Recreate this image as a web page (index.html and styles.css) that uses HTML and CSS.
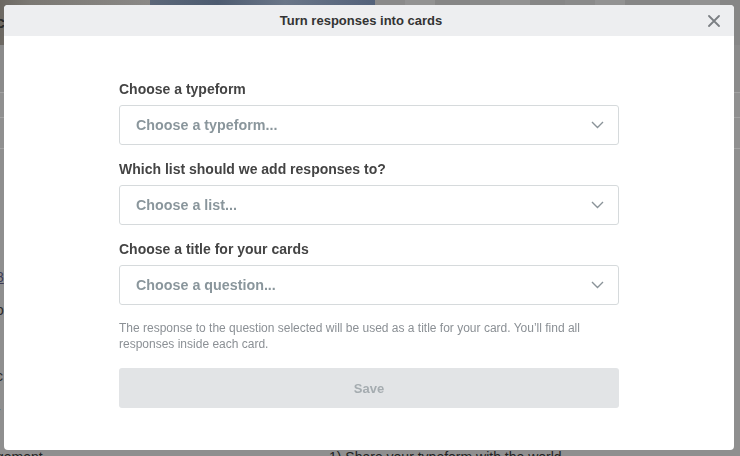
FILE: index.html
```html
<!DOCTYPE html>
<html lang="en">
<head>
<meta charset="utf-8">
<title>Turn responses into cards</title>
<link rel="stylesheet" href="styles.css">
</head>
<body>
<div class="page">
  <div class="banner">
    <div class="banner-left"><span class="banner-letter">c</span></div>
    <div class="banner-photo"></div>
    <div class="banner-right"></div>
  </div>
  <div class="page-row row-a"></div>
  <div class="page-row row-b"></div>
  <div class="page-row row-c"></div>
  <div class="page-body">
    <div class="side-col">
      <span class="frag frag-link">8</span>
      <span class="frag">o</span>
      <span class="frag frag-visited">i</span>
      <span class="frag">c</span>
      <span class="frag">-</span>
    </div>
  </div>
  <div class="page-foot">
    <span class="foot-left">gement</span>
    <span class="foot-right">1) Share your typeform with the world</span>
  </div>
</div>

<div class="modal">
  <div class="modal-header">
    <h1 class="modal-title">Turn responses into cards</h1>
    <button class="close" aria-label="Close">
      <svg width="12" height="12" viewBox="0 0 12 12"><path d="M1 1L11 11M11 1L1 11" stroke="#7b7f83" stroke-width="1.8" stroke-linecap="round" fill="none"/></svg>
    </button>
  </div>
  <div class="modal-body">
    <form class="form">
      <div class="field">
        <label class="label">Choose a typeform</label>
        <div class="select"><span class="placeholder">Choose a typeform...</span>
          <svg class="chevron" width="13" height="8" viewBox="0 0 13 8"><path d="M1 1L6.5 6.5L12 1" stroke="#8a9399" stroke-width="1.4" fill="none"/></svg>
        </div>
      </div>
      <div class="field">
        <label class="label">Which list should we add responses to?</label>
        <div class="select"><span class="placeholder">Choose a list...</span>
          <svg class="chevron" width="13" height="8" viewBox="0 0 13 8"><path d="M1 1L6.5 6.5L12 1" stroke="#8a9399" stroke-width="1.4" fill="none"/></svg>
        </div>
      </div>
      <div class="field">
        <label class="label">Choose a title for your cards</label>
        <div class="select"><span class="placeholder">Choose a question...</span>
          <svg class="chevron" width="13" height="8" viewBox="0 0 13 8"><path d="M1 1L6.5 6.5L12 1" stroke="#8a9399" stroke-width="1.4" fill="none"/></svg>
        </div>
      </div>
      <p class="help">The response to the question selected will be used as a title for your card. You’ll find all responses inside each card.</p>
      <button type="button" class="save">Save</button>
    </form>
  </div>
</div>
</body>
</html>
```

FILE: styles.css
```css
html, body {
  margin: 0;
  padding: 0;
}
body {
  width: 740px;
  height: 456px;
  overflow: hidden;
  background: #8e8e8e;
  font-family: "Liberation Sans", Arial, sans-serif;
}

/* dimmed page behind the modal */
.page {
  display: flex;
  flex-direction: column;
  height: 456px;
}
.banner {
  display: flex;
  height: 45px;
}
.banner-left {
  width: 150px;
  background: linear-gradient(90deg, #6c6862 0%, #7b7873 20%, #8a8886 100%);
}
.banner-letter {
  display: block;
  margin: 14px 0 0 -4px;
  font-size: 16px;
  font-weight: bold;
  color: #2a2a2a;
}
.banner-photo {
  width: 225px;
  background: linear-gradient(90deg, #5b6778 0%, #4d5b70 30%, #6a7688 60%, #52617a 100%);
}
.banner-right {
  flex: 1;
  background: repeating-linear-gradient(90deg, #8a8a8a 0 30px, #929292 30px 60px, #868686 60px 95px);
}
.page-row {
  border-bottom: 1px solid #a2a2a2;
}
.row-a {
  height: 47px;
  background: #8b8b8b;
}
.row-b {
  height: 24px;
  background: #909090;
}
.row-c {
  height: 30px;
  background: #909090;
}
.page-body {
  flex: 1;
  background: #8f8f8f;
}
.side-col {
  display: flex;
  flex-direction: column;
  gap: 17px;
  padding-top: 120px;
  width: 4px;
  overflow: hidden;
  font-size: 14px;
  line-height: 16px;
  color: #2a2a2a;
}
.frag {
  display: block;
  margin-left: -4px;
}
.frag-link {
  color: #3a3a55;
  text-decoration: underline;
}
.frag-visited {
  color: #4a3a8a;
}
.page-foot {
  height: 6px;
  display: flex;
  background: #8f8f8f;
  font-size: 14px;
  line-height: 14px;
  color: #222;
  overflow: hidden;
}
.foot-left {
  width: 333px;
  margin-left: -4px;
}

/* modal */
.modal {
  position: fixed;
  top: 5px;
  left: 4px;
  width: 730px;
  height: 445px;
  background: #fff;
  border-radius: 4px;
  overflow: hidden;
  display: flex;
  flex-direction: column;
}
.modal-header {
  box-sizing: border-box;
  height: 31px;
  padding: 1px 16px 0 0;
  background: #edeef0;
  display: flex;
  align-items: center;
  justify-content: center;
  position: relative;
  flex-shrink: 0;
}
.modal-title {
  margin: 0;
  font-size: 13px;
  font-weight: bold;
  color: #333;
  line-height: 16px;
}
.close {
  position: absolute;
  right: 14px;
  top: 10px;
  width: 12px;
  height: 12px;
  padding: 0;
  border: 0;
  background: none;
  display: flex;
}
.modal-body {
  flex: 1;
  display: flex;
  justify-content: center;
  padding-top: 45px;
}
.form {
  width: 500px;
  display: flex;
  flex-direction: column;
}
.field {
  display: flex;
  flex-direction: column;
  margin-bottom: 16px;
}
.field:nth-child(3) {
  margin-bottom: 15px;
}
.label {
  font-size: 14px;
  line-height: 16px;
  font-weight: bold;
  color: #444;
  margin-bottom: 8px;
}
.select {
  box-sizing: border-box;
  height: 40px;
  border: 1px solid #d6dadc;
  border-radius: 3px;
  display: flex;
  align-items: center;
  justify-content: space-between;
  padding: 0 14px 0 16px;
}
.placeholder {
  font-size: 14.3px;
  font-weight: bold;
  color: #8a969c;
}
.chevron {
  display: block;
}
.help {
  margin: 0 0 16px;
  font-size: 12px;
  line-height: 16px;
  color: #8b9095;
}
.save {
  height: 40px;
  border: 0;
  border-radius: 3px;
  background: #e2e4e6;
  color: #a5acb0;
  font-family: "Liberation Sans", Arial, sans-serif;
  font-size: 13px;
  font-weight: bold;
  padding: 0;
}
```
